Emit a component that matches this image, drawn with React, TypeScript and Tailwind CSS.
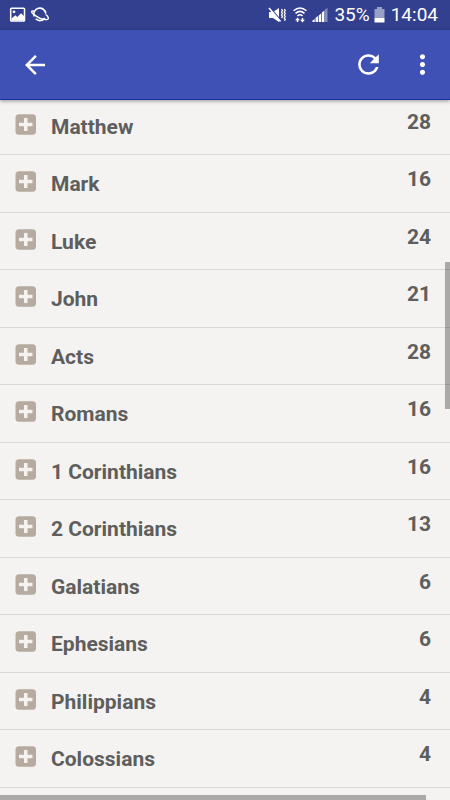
import { useState } from "react";

type Book = { name: string; chapters: number };

const books: Book[] = [
  { name: "Matthew", chapters: 28 },
  { name: "Mark", chapters: 16 },
  { name: "Luke", chapters: 24 },
  { name: "John", chapters: 21 },
  { name: "Acts", chapters: 28 },
  { name: "Romans", chapters: 16 },
  { name: "1 Corinthians", chapters: 16 },
  { name: "2 Corinthians", chapters: 13 },
  { name: "Galatians", chapters: 6 },
  { name: "Ephesians", chapters: 6 },
  { name: "Philippians", chapters: 4 },
  { name: "Colossians", chapters: 4 },
];

function StatusBar() {
  return (
    <div className="flex h-[30px] shrink-0 items-center justify-between bg-[#33408f] pr-3 pl-2 text-[19px] leading-[30px] text-white">
      <div className="flex items-center gap-1">
        <svg width="18" height="16" viewBox="0 0 18 16">
          <rect x="2.7" y="1.2" width="13.8" height="12.8" rx="0.8" fill="none" stroke="#fff" strokeWidth="1.5" />
          <path d="M3.5 11.5 L7.3 8.2 L9.3 10 L13 6.3 L16 9 V13.5 H3.5Z" fill="#fff" />
          <circle cx="6" cy="4.8" r="1.4" fill="#fff" />
        </svg>
        <svg width="20" height="16" viewBox="0 0 20 16" fill="none" stroke="#fff">
          <path d="M4.3 9.5 A6 6 0 1 1 15.8 6.6" strokeWidth="1.6" />
          <path d="M5.7 11.8 A6 6 0 0 0 14.9 11" strokeWidth="1.6" />
          <path d="M4.6 4.2 C0.5 3.2 0.8 5.3 4 7.6 C8 10.6 13.5 13 17 12.6 C19.5 12 18.2 9.3 15.6 7.5" strokeWidth="1.4" />
        </svg>
      </div>

      <div className="flex items-center">
        <svg className="mr-1.5" width="18" height="18" viewBox="0 0 18 18">
          <path d="M1 6h4L11 2v14l-6-4H1Z" fill="#fff" />
          <path d="M1.500 1 13 14.500" stroke="#33408f" strokeWidth="1.200" />
          <path d="M1 2 12.500 15.500" stroke="#fff" strokeWidth="1.600" />
          <path d="M13.500 3l1 1.500-1 1.500 1 1.500-1 1.500 1 1.500-1 1.500M16.300 3l1 1.500-1 1.500 1 1.500-1 1.500 1 1.500-1 1.500 1 1.500-1 1" fill="none" stroke="#fff" strokeWidth="1.300" />
        </svg>
        <svg className="mr-1" width="16" height="18" viewBox="0 0 16 18">
          <g fill="none" stroke="#fff" strokeWidth="1.500">
            <path d="M1.500 4.700q6.500-5.500 13 0" />
            <path d="M3.500 7.400q4.500-4 9 0" />
            <path d="M5.500 10q2.500-2.400 5 0" />
          </g>
          <path d="M5.500 11.500l2.400 2.700H6.300V16H4.700v-1.800H3.100ZM10.500 16.500l2.400-2.700h-1.600V12H9.700v1.800H8.100Z" fill="#fff" />
        </svg>
        <svg className="mr-1.5" width="16" height="16" viewBox="0 0 16 16" fill="#fff">
          <path d="M.5 15v-1.500L2.700 12v3ZM3.500 15v-4l2.500-2v6ZM6.700 15V8.500l2.500-2V15ZM9.900 15V5.500l2.500-2V15Z" />
          <path d="M13 2.500 15.500 1v14H13Z" opacity=".4" />
        </svg>
        <span>35%</span>
        <svg className="mr-1.5 ml-1" width="11" height="16" viewBox="0 0 11 16" fill="#fff">
          <path d="M3 0h5v2h2.500v9H.5V2H3Z" opacity=".5" />
          <path d="M.5 11h10v4.500H.5Z" />
        </svg>
        <span>14:04</span>
      </div>
    </div>
  );
}

function AppBar() {
  return (
    <header className="relative z-10 flex h-[70px] shrink-0 items-center border-b border-[#1335a8] bg-[#3f51b5] pr-3 pl-[11px] text-white shadow-[0_1px_4px_rgba(0,0,0,0.4)]">
      <button type="button" aria-label="Back" className="flex h-12 w-12 items-center justify-center">
        <svg width="30" height="30" viewBox="0 0 24 24" fill="currentColor">
          <path d="M20 11H7.830l5.590-5.590L12 4l-8 8 8 8 1.410-1.410L7.830 13H20v-2z" />
        </svg>
      </button>
      <button type="button" aria-label="Refresh" className="ml-auto flex h-12 w-12 items-center justify-center">
        <svg width="31" height="31" viewBox="0 0 24 24" fill="currentColor">
          <path d="M17.650 6.350C16.200 4.900 14.210 4 12 4c-4.420 0-7.990 3.580-7.990 8s3.570 8 7.990 8c3.730 0 6.840-2.550 7.730-6h-2.080c-.820 2.330-3.040 4-5.650 4-3.310 0-6-2.690-6-6s2.690-6 6-6c1.660 0 3.140.690 4.220 1.780L13 11h7V4l-2.350 2.350z" />
        </svg>
      </button>
      <button type="button" aria-label="More options" className="-mr-2 ml-1.5 flex h-12 w-12 items-center justify-center">
        <svg width="31" height="31" viewBox="0 0 24 24" fill="currentColor">
          <path d="M12 8c1.100 0 2-.900 2-2s-.900-2-2-2-2 .900-2 2 .900 2 2 2zm0 2c-1.100 0-2 .900-2 2s.900 2 2 2 2-.900 2-2-.900-2-2-2zm0 6c-1.100 0-2 .900-2 2s.900 2 2 2 2-.900 2-2-.900-2-2-2z" />
        </svg>
      </button>
    </header>
  );
}

function BookRow({ book, open, onToggle }: { book: Book; open: boolean; onToggle: () => void }) {
  return (
    <li className="h-[57px] border-b border-[#d9d8d6] even:h-[58px]">
      <button
        type="button"
        aria-expanded={open}
        onClick={onToggle}
        className="flex h-full w-full items-start pt-4 pr-[19px] pl-[15px] text-left text-[21px] leading-6 font-bold text-[#5e5e5d]"
      >
        <svg className="shrink-0" width="22" height="22" viewBox="0 0 22 22">
          <rect x="0.500" y="0.300" width="20.500" height="20.500" rx="3.500" fill="#b5ab9e" />
          <path d={open ? "M4 8.800h13.500v3.500H4Z" : "M4 8.800h5V4h3.500v4.800h5v3.500h-5V17H9v-4.700H4Z"} fill="#f4f3f1" />
        </svg>
        <span className="mt-px ml-3.5">{book.name}</span>
        <span className="-mt-1 ml-auto">{book.chapters}</span>
      </button>
    </li>
  );
}

export default function App() {
  const [openBook, setOpenBook] = useState<string | null>(null);

  return (
    <div className="flex h-screen flex-col overflow-hidden bg-[#f4f3f1] font-[Roboto,sans-serif]">
      <StatusBar />
      <AppBar />
      <main className="relative flex-1 overflow-hidden">
        {/* list is scrolled slightly under the app bar */}
        <ul className="-mt-0.5">
          {books.map((book) => (
            <BookRow
              key={book.name}
              book={book}
              open={openBook === book.name}
              onToggle={() => setOpenBook(openBook === book.name ? null : book.name)}
            />
          ))}
        </ul>
        {/* scroll indicators */}
        <div className="absolute top-[162px] right-0 h-[147px] w-[5px] bg-black/30" />
        <div className="absolute right-6 bottom-0 left-0 h-[5px] bg-black/30" />
      </main>
    </div>
  );
}
